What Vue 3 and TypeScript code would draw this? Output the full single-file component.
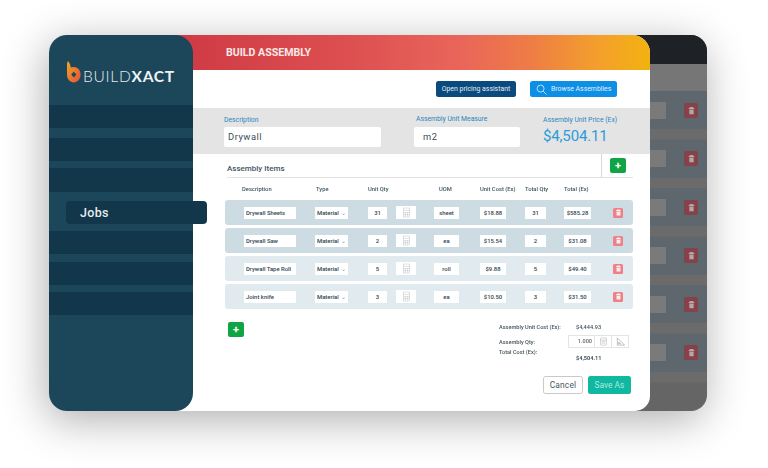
<script setup lang="ts">
interface Item {
  name: string
  type: string
  qty: string
  uom: string
  cost: string
  totalQty: string
  total: string
  dark: boolean
}

const items: Item[] = [
  { name: 'Drywall Sheets', type: 'Material', qty: '31', uom: 'sheet', cost: '$18.88', totalQty: '31', total: '$585.28', dark: true },
  { name: 'Drywall Saw', type: 'Material', qty: '2', uom: 'ea', cost: '$15.54', totalQty: '2', total: '$31.08', dark: true },
  { name: 'Drywall Tape Roll', type: 'Material', qty: '5', uom: 'roll', cost: '$9.88', totalQty: '5', total: '$49.40', dark: false },
  { name: 'Joint knife', type: 'Material', qty: '3', uom: 'ea', cost: '$10.50', totalQty: '3', total: '$31.50', dark: false },
]
const backRows = [1, 2, 3, 4, 5, 6]
const bandsBefore = [1, 2, 3]
const bandsAfter = [1, 2, 3]
</script>

<template>
  <div class="stage">
    <section class="back">
      <div class="back-head"></div>
      <div class="back-sub"></div>
      <div class="back-rows">
        <div v-for="r in backRows" :key="r" class="back-row">
          <span class="back-input"></span>
          <span class="back-trash">
            <svg viewBox="0 0 10 10" width="9" height="9"><path d="M3 1.2h4v1h1.2v1H1.8v-1H3zM2.6 3.9h4.8v5.2H2.6z" fill="#b9a4a6" /></svg>
          </span>
        </div>
      </div>
    </section>

    <section class="modal">
      <header class="modal-head"><h1>BUILD ASSEMBLY</h1></header>
      <div class="toolbar">
        <button class="btn-pricing">Open pricing assistant</button>
        <button class="btn-browse">
          <svg viewBox="0 0 12 12" width="11" height="11" fill="none" stroke="#d5ecfb" stroke-width=".9"><circle cx="5" cy="5" r="3.8" /><path d="M7.8 7.8 11.4 11.4" /></svg>
          Browse Assemblies
        </button>
      </div>

      <div class="band">
        <div class="field f-desc">
          <label>Description</label>
          <div class="input">Drywall</div>
        </div>
        <div class="field f-uom">
          <label>Assembly Unit Measure</label>
          <div class="input indent">m2</div>
        </div>
        <div class="field f-price">
          <label>Assembly Unit Price (Ex)</label>
          <div class="price">$4,504.11</div>
        </div>
      </div>

      <div class="items-head">
        <h2>Assembly Items</h2>
        <div class="add-cell">
          <button class="add" aria-label="Add">+</button>
        </div>
      </div>

      <div class="grid grid-head">
        <span class="h-desc">Description</span>
        <span class="h-type">Type</span>
        <span>Unit Qty</span>
        <span></span>
        <span class="h-uom">UOM</span>
        <span>Unit Cost (Ex)</span>
        <span>Total Qty</span>
        <span>Total (Ex)</span>
        <span></span>
      </div>

      <div class="rows">
        <div v-for="it in items" :key="it.name" class="grid row" :class="{ dark: it.dark }">
          <span class="cell c-name">{{ it.name }}</span>
          <span class="cell c-type">{{ it.type }} <i>⌄</i></span>
          <span class="cell c-qty">{{ it.qty }}</span>
          <span class="cell c-calc">
            <svg viewBox="0 0 10 14" width="7" height="11" fill="none" stroke="#bcc4c8" stroke-width=".7"><rect x=".6" y=".6" width="8.8" height="12.8" /><path d="M.6 4h8.8M.6 7h8.8M.6 10h8.8M3.5 7v6M6.5 7v6" /></svg>
          </span>
          <span class="cell c-uom">{{ it.uom }}</span>
          <span class="cell c-cost">{{ it.cost }}</span>
          <span class="cell c-tq">{{ it.totalQty }}</span>
          <span class="cell c-total">{{ it.total }}</span>
          <span class="trash">
            <svg viewBox="0 0 10 10" width="7" height="7"><path d="M3 .8h4v1h1.6v1.1H1.4V1.8H3zM2.2 3.6h5.6v5.6H2.2z" fill="#fdeeee" /></svg>
          </span>
        </div>
      </div>

      <div class="bottom">
        <button class="add" aria-label="Add item">+</button>
        <div class="summary">
          <div class="s-line">
            <span>Assembly Unit Cost (Ex):</span>
            <span class="s-val">$4,444.93</span>
          </div>
          <div class="s-line s-qty">
            <span>Assembly Qty:</span>
            <div class="qty-box">
              <span class="qty-val">1.000</span>
              <span class="qty-ic">
                <svg viewBox="0 0 10 12" width="7" height="9" fill="none" stroke="#b4b4b4" stroke-width=".8"><rect x=".8" y=".8" width="8.4" height="10.4" rx="1" /><path d="M.8 4h8.4M2.5 6.2h5M2.5 8.4h5" /></svg>
              </span>
              <span class="qty-ic">
                <svg viewBox="0 0 10 10" width="9" height="9" fill="none" stroke="#a8a8a8" stroke-width=".8"><path d="M1.5 1v8h8zM3 5.5v2h2z" /></svg>
              </span>
            </div>
          </div>
          <div class="s-line s-total"><span>Total Cost (Ex):</span></div>
          <div class="s-line s-grand"><span></span><span class="s-val strong">$4,504.11</span></div>
        </div>
      </div>

      <div class="actions">
        <button class="cancel">Cancel</button>
        <button class="save">Save As</button>
      </div>
    </section>

    <aside class="side">
      <div class="logo">
        <svg viewBox="0 0 14 22" width="14" height="22">
          <defs>
            <linearGradient id="lg" x1="0" y1="0" x2="1" y2="1">
              <stop offset="0" stop-color="#f6a623" />
              <stop offset="1" stop-color="#e2513c" />
            </linearGradient>
          </defs>
          <path fill-rule="evenodd" d="M1 0c1.6 2 2.6 3.8 2.8 6.6.8-.4 1.8-.6 2.9-.6C10.6 6 13.6 9 13.6 13.6S10.6 21.4 6.8 21.4 0 18.4 0 13.6V4C0 2.4.3 1 1 0zM6.8 10.8 4.2 13.6l2.6 2.8 2.6-2.8z" fill="url(#lg)" />
        </svg>
        <span class="wordmark">BUILD<b>XACT</b></span>
      </div>
      <div class="nav">
        <div v-for="b in bandsBefore" :key="'a' + b" class="nav-band"></div>
        <div class="nav-band jobs">Jobs</div>
        <div v-for="b in bandsAfter" :key="'b' + b" class="nav-band"></div>
      </div>
    </aside>
  </div>
</template>

<style>
html, body { margin: 0; background: #fff; }
</style>

<style scoped>
.stage {
  position: relative;
  width: 768px;
  height: 468px;
  overflow: hidden;
  background: #fff;
  font-family: Roboto, "Liberation Sans", sans-serif;
}
button { font-family: inherit; border: 0; padding: 0; cursor: pointer; }

/* back window */
.back {
  position: absolute;
  left: 500px;
  top: 35px;
  width: 207px;
  height: 376px;
  border-radius: 16px;
  overflow: hidden;
  background: #656565;
  display: flex;
  flex-direction: column;
}
.stage::before {
  content: "";
  position: absolute;
  left: 49px;
  top: 35px;
  width: 658px;
  height: 376px;
  border-radius: 18px;
  box-shadow: -3px 9px 44px rgba(0, 0, 0, .32);
}
.back-head { height: 29px; background: #1e2226; flex: none; }
.back-sub { height: 27px; background: #767676; flex: none; }
.back-rows { display: flex; flex-direction: column; gap: 10.6px; }
.back-row {
  height: 38px;
  background: #5e676d;
  display: flex;
  align-items: center;
  justify-content: flex-end;
  gap: 18px;
  padding-right: 9px;
  box-shadow: 0 10.6px 0 #6b6b6b;
}
.back-input { width: 40px; height: 17px; background: #7a7a7a; }
.back-trash {
  width: 14px; height: 15px; border-radius: 2px; background: #84434a;
  display: flex; align-items: center; justify-content: center;
}

/* modal */
.modal {
  position: absolute;
  left: 175px;
  top: 35px;
  width: 475px;
  height: 376px;
  background: #fff;
  border-radius: 0 18px 15px 0;
  overflow: hidden;
}
.modal-head {
  height: 35px;
  background: linear-gradient(90deg, #cf3a44 0%, #dc4e50 35%, #e9655a 60%, #ee7d45 75%, #f4a12a 90%, #f3b210 100%);
  padding-left: 51px;
  display: flex;
  align-items: center;
}
.modal-head h1 {
  margin: 0;
  font-size: 10.6px;
  font-weight: 700;
  color: #fbe9e6;
}
.toolbar {
  height: 38px;
  box-sizing: border-box;
  padding: 11px 33px 0 0;
  display: flex;
  justify-content: flex-end;
  gap: 14px;
}
.btn-pricing, .btn-browse {
  height: 16px;
  border-radius: 2.5px;
  font-size: 6.9px;
  color: #e2eef7;
}
.btn-pricing { width: 80px; background: #0b4a7c; }
.btn-browse {
  width: 87px;
  background: #0d8fe6;
  display: flex;
  align-items: center;
  gap: 4px;
  padding-left: 6px;
  box-sizing: border-box;
}
.band {
  height: 46px;
  background: #e4e4e4;
  display: flex;
  padding-left: 49px;
}
.field { display: flex; flex-direction: column; }
.field label {
  font-size: 6.8px;
  line-height: 8px;
  color: #2a86bd;
  margin-top: 8px;
  height: 11px;
}
.f-desc { width: 157px; margin-right: 33px; }
.f-uom { width: 106px; margin-right: 23px; }
.f-uom label { margin-top: 7px; height: 12px; padding-left: 2px; }
.input {
  height: 20px;
  background: #fff;
  border-radius: 2px;
  font-size: 9.4px;
  line-height: 19px;
  padding-left: 4px;
  color: #3b4d56;
  letter-spacing: .5px;
}
.indent { padding-left: 9px; }
.price { font-size: 15px; line-height: 20px; color: #2a9bdc; margin-top: -1px; letter-spacing: -.15px; }

.items-head {
  margin: 0 17px 0 52px;
  height: 24px;
  border-bottom: 1px solid #e3e3e3;
  box-sizing: border-box;
  display: flex;
  align-items: stretch;
  justify-content: space-between;
}
.items-head h2 {
  margin: 0;
  font-size: 8px;
  font-weight: 500;
  color: #3d5560;
  line-height: 29px;
}
.add-cell {
  width: 32px;
  border-left: 1px solid #d8d8d8;
  padding: 4px 0 0 8px;
  box-sizing: border-box;
}
.add {
  width: 16px;
  height: 15px;
  background: #0fa544;
  color: #fff;
  border-radius: 2px;
  font-size: 11px;
  line-height: 14px;
  font-weight: 700;
  display: block;
}

.grid {
  display: grid;
  grid-template-columns: 71px 53px 28px 38px 46px 45px 39px 49px 10px;
  margin-left: 50px;
  width: 408px;
  box-sizing: border-box;
  padding-left: 19px;
  align-items: center;
}
.grid-head {
  height: 22px;
  font-size: 5.8px;
  font-weight: 500;
  color: #3d5560;
  white-space: nowrap;
  filter: blur(.3px);
}
.h-desc { margin-left: -2px; }
.h-type { margin-left: 1px; }
.h-uom { margin-left: 5px; }
.rows { display: flex; flex-direction: column; gap: 3px; }
.row { height: 25px; background: #e0eaef; border-radius: 3px; }
.row.dark { background: #cddce3; }
.cell {
  display: flex;
  align-items: center;
  justify-content: center;
  height: 12px;
  background: #fff;
  font-size: 5.9px;
  font-weight: 500;
  color: #2f4651;
  white-space: nowrap;
}
.c-name { width: 52px; justify-content: flex-start; padding-left: 2px; box-sizing: border-box; }
.c-type { width: 33px; justify-content: flex-start; padding-left: 2px; box-sizing: border-box; gap: 2px; }
.c-type i { font-style: normal; font-weight: 400; color: #8a9aa2; }
.c-qty { width: 19px; }
.c-calc { width: 20px; background: #fff; height: 13px; }
.c-uom { width: 25px; }
.c-cost { width: 26px; }
.c-tq { width: 21px; }
.c-total { width: 27px; }
.trash {
  width: 10px;
  height: 10px;
  border-radius: 1.5px;
  background: #ef8088;
  display: flex;
  align-items: center;
  justify-content: center;
}

.bottom {
  display: flex;
  justify-content: space-between;
  padding: 13px 0 0 53px;
  height: 53px;
  box-sizing: border-box;
}
.summary { width: 151px; font-size: 5.6px; color: #44555d; font-weight: 500; filter: blur(.25px); }
.s-line { display: flex; height: 9px; align-items: center; white-space: nowrap; }
.s-line > span:first-child { width: 77px; }
.s-val { font-weight: 500; }
.s-val.strong { font-weight: 700; }
.s-qty { height: 13px; margin-top: 4px; }
.s-qty > span:first-child { width: 69px; }
.qty-box {
  display: flex;
  height: 13px;
  border: 1px solid #e4e4e4;
  box-sizing: border-box;
  color: #666;
}
.qty-val { width: 25px; text-align: right; line-height: 11px; padding-right: 2px; box-sizing: border-box; }
.qty-ic {
  width: 16px;
  border-left: 1px solid #e4e4e4;
  display: flex;
  align-items: center;
  justify-content: center;
}
.s-total { margin-top: -1px; }
.s-grand { margin-top: -3px; }

.actions {
  margin-top: 14px;
  padding-right: 19px;
  display: flex;
  justify-content: flex-end;
  gap: 5px;
}
.cancel, .save { height: 18px; border-radius: 2.5px; font-size: 8.4px; }
.cancel { width: 40px; background: #fff; border: 1px solid #c9c9c9; color: #47575f; box-sizing: border-box; letter-spacing: .2px; }
.save { width: 43px; background: #0fb89f; color: #a9ece1; }

/* sidebar */
.side {
  position: absolute;
  left: 49px;
  top: 35px;
  width: 144px;
  height: 376px;
  border-radius: 18px;
  background: #1c4659;
}
.logo {
  height: 70px;
  box-sizing: border-box;
  padding: 26px 0 0 18px;
  display: flex;
  align-items: flex-start;
}
.wordmark {
  margin: 6px 0 0 2px;
  font-size: 15.6px;
  line-height: 18px;
  letter-spacing: .7px;
  font-family: Lato, Roboto, sans-serif;
  font-weight: 300;
  color: #e4ebee;
}
.wordmark b { font-weight: 700; color: #eef3f5; }
.nav { display: flex; flex-direction: column; }
.nav-band { height: 23px; background: #12364a; flex: none; }
.nav-band:nth-child(2) { margin-top: 10px; }
.nav-band:nth-child(3) { margin-top: 7px; height: 24px; }
.nav-band:nth-child(4) { margin-top: 9px; }
.nav-band:nth-child(5) { margin-top: 7px; }
.nav-band:nth-child(6) { margin-top: 8px; }
.nav-band:nth-child(7) { margin-top: 7px; }
.jobs {
  margin-left: 17px;
  margin-right: -14px;
  border-radius: 4px;
  padding-left: 14px;
  font-size: 12.5px;
  font-weight: 500;
  line-height: 23px;
  color: #e6ecef;
  letter-spacing: .3px;
}
</style>
